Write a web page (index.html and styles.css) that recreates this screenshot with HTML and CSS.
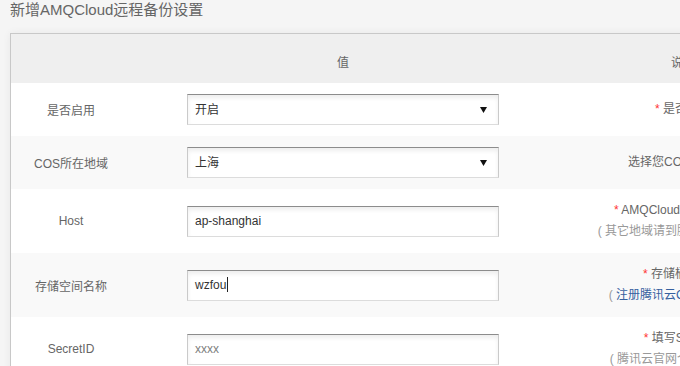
FILE: index.html
```html
<!DOCTYPE html>
<html lang="zh-CN">
<head>
<meta charset="utf-8">
<title>新增AMQCloud远程备份设置</title>
<link rel="stylesheet" href="styles.css">
</head>
<body>
<h1 class="title">新增AMQCloud远程备份设置</h1>
<div class="panel">
  <div class="row head">
    <div class="cell"></div>
    <div class="cell">值</div>
    <div class="cell">说明</div>
  </div>
  <div class="row">
    <div class="cell label">是否启用</div>
    <div class="cell value">
      <div class="field select"><span>开启</span><svg class="arrow" width="7" height="6" viewBox="0 0 7 6"><path d="M0 0H7L3.5 6Z" fill="#111"/></svg></div>
    </div>
    <div class="cell desc"><span class="req">*</span> 是否启用</div>
  </div>
  <div class="row alt">
    <div class="cell label">COS所在地域</div>
    <div class="cell value">
      <div class="field select"><span>上海</span><svg class="arrow" width="7" height="6" viewBox="0 0 7 6"><path d="M0 0H7L3.5 6Z" fill="#111"/></svg></div>
    </div>
    <div class="cell desc">选择您COS所在地域</div>
  </div>
  <div class="row">
    <div class="cell label">Host</div>
    <div class="cell value">
      <div class="field"><span>ap-shanghai</span></div>
    </div>
    <div class="cell desc"><span class="req">*</span> AMQCloud远程备份地址<br><span class="note">( 其它地域请到腾讯云官网申请 )</span></div>
  </div>
  <div class="row alt">
    <div class="cell label">存储空间名称</div>
    <div class="cell value">
      <div class="field"><span>wzfou</span><span class="caret"></span></div>
    </div>
    <div class="cell desc"><span class="req">*</span> 存储桶的名称<br><span class="note">( <a class="link" href="#">注册腾讯云COS存储空间</a> )</span></div>
  </div>
  <div class="row">
    <div class="cell label">SecretID</div>
    <div class="cell value">
      <div class="field"><span class="placeholder">xxxx</span></div>
    </div>
    <div class="cell desc"><span class="req">*</span> 填写SecretID<br><span class="note">( 腾讯云官网个人中心获取 )</span></div>
  </div>
</div>
</body>
</html>
```
FILE: styles.css
```css
html, body {
  margin: 0;
  padding: 0;
  overflow: hidden;
  background: #f5f5f5;
  font-family: "Liberation Sans", "Noto Sans CJK SC", sans-serif;
  font-size: 12px;
  color: #666;
}
.title {
  margin: 0;
  padding-left: 10px;
  font-size: 15px;
  font-weight: normal;
  line-height: 20px;
  color: #666;
}
.panel {
  margin: 13px 0 0 10px;
  width: 801px;
  border-top: 1px solid #c8c8c8;
  border-left: 1px solid #c8c8c8;
  background: #fff;
  box-shadow: 0 0 8px rgba(0, 0, 0, 0.06);
}
.row {
  display: grid;
  grid-template-columns: 120px 424px 256px;
  background: #fff;
}
.row.alt {
  background: #f9f9f9;
}
.row.head {
  background: #efefef;
  height: 49px;
}
.cell {
  display: flex;
  align-items: center;
  justify-content: center;
  text-align: center;
  padding: 11px 0;
  white-space: nowrap;
}
.head .cell {
  padding: 5px 0 0;
  color: #666;
}
.label {
  color: #666;
}
.desc {
  display: block;
  align-self: center;
  line-height: 21px;
  padding: 11px 0;
}
.req {
  color: #f33;
}
.note {
  color: #999;
}
.link {
  color: #35609f;
  text-decoration: none;
}
.field {
  box-sizing: border-box;
  width: 312px;
  height: 31px;
  display: flex;
  align-items: center;
  padding: 0 6px 1px 7px;
  border: 1px solid #cacaca;
  border-top-color: #8c8c8c;
  border-bottom-color: #dcdcdc;
  background: #fff;
  box-shadow: inset 0 3px 4px rgba(0, 0, 0, 0.07);
  color: #333;
  text-align: left;
}
.select {
  justify-content: space-between;
  padding-bottom: 3px;
}
.arrow {
  margin-right: 5px;
  margin-top: 3px;
}
.caret {
  display: inline-block;
  width: 1px;
  height: 15px;
  background: #222;
  margin-left: 1px;
}
.placeholder {
  color: #808080;
}
```
